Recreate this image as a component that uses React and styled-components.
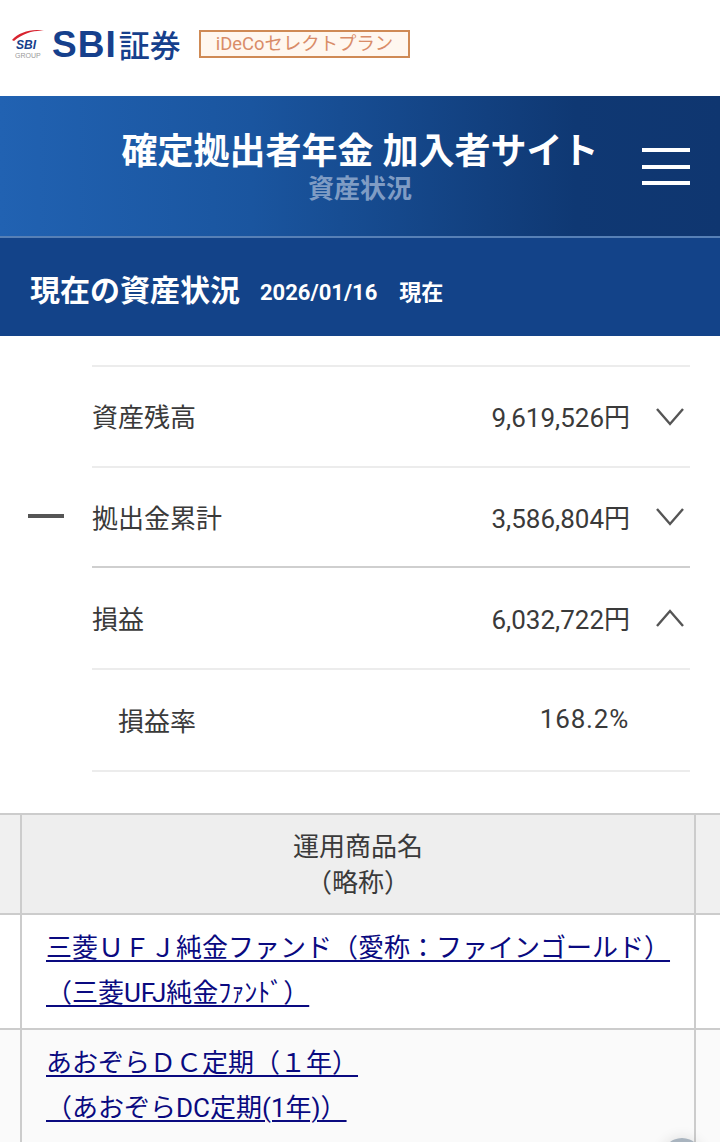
import React from "react";
import styled, { createGlobalStyle } from "styled-components";

const GlobalStyle = createGlobalStyle`
  html, body {
    margin: 0;
    padding: 0;
    background: #fff;
  }
  body {
    font-family: Roboto, "Noto Sans CJK JP", sans-serif;
    color: #333;
  }
`;

const Page = styled.div`
  position: relative;
  width: 720px;
  height: 1142px;
  overflow: hidden;
  background: #fff;
`;

const LogoBar = styled.header`
  height: 96px;
  display: flex;
  align-items: flex-start;
  padding: 28px 0 0 11px;
  box-sizing: border-box;
`;

const LogoMark = styled.svg`
  width: 36px;
  height: 32px;
  flex: none;
  margin-right: 5px;
`;

const LogoText = styled.div`
  font-family: "Liberation Sans", "Noto Sans CJK JP", sans-serif;
  font-size: 37px;
  line-height: 32px;
  font-weight: 700;
  color: #16408c;
  white-space: nowrap;
  width: 147px;
  flex: none;
  letter-spacing: 1px;
  span {
    font-family: "Noto Sans CJK JP", sans-serif;
    font-size: 31px;
    letter-spacing: 0;
    font-weight: 500;
    margin-left: 2px;
  }
`;

const PlanBadge = styled.div`
  width: 211px;
  height: 28px;
  margin-top: 2px;
  box-sizing: border-box;
  border: 2px solid #cf8a55;
  background: #fff7ef;
  color: #d98c68;
  font-size: 18.4px;
  line-height: 24px;
  text-align: center;
  white-space: nowrap;
`;

const TitleBand = styled.div`
  position: relative;
  height: 140px;
  box-sizing: border-box;
  padding-top: 34px;
  background: linear-gradient(90deg, #2162b2 0%, #1a559f 35%, #0f3873 80%, #0f3670 100%);
  text-align: center;
  color: #fff;
`;

const SiteTitle = styled.div`
  font-size: 36px;
  line-height: 44px;
  font-weight: 700;
  white-space: nowrap;
`;

const SiteSub = styled.div`
  font-size: 26px;
  line-height: 30px;
  font-weight: 700;
  color: #7f9cc4;
`;

const MenuButton = styled.div`
  position: absolute;
  right: 30px;
  top: 52px;
  width: 48px;
  height: 37px;
  display: flex;
  flex-direction: column;
  justify-content: space-between;
  span {
    display: block;
    height: 4px;
    background: #fff;
  }
`;

const SectionBand = styled.div`
  height: 100px;
  box-sizing: border-box;
  border-top: 2px solid #5780b6;
  background: #134389;
  color: #fff;
  display: flex;
  align-items: center;
  padding: 2px 0 0 30px;
`;

const SectionTitle = styled.div`
  font-size: 30px;
  font-weight: 700;
  margin-right: 20px;
  white-space: nowrap;
`;

const SectionDate = styled.div`
  font-size: 22px;
  font-weight: 700;
  padding-top: 4px;
  white-space: pre;
`;

const Summary = styled.section`
  padding: 29px 30px 41px 28px;
`;

const SummaryRow = styled.div`
  display: flex;
  align-items: center;
`;

const Dash = styled.div`
  width: 36px;
  height: 4px;
  background: #555;
  flex: none;
  visibility: ${(p) => (p.$hidden ? "hidden" : "visible")};
`;

const RowBody = styled.div`
  flex: 1;
  margin-left: 28px;
  height: ${(p) => p.$height}px;
  box-sizing: border-box;
  border-top: 2px solid ${(p) => p.$line};
  display: flex;
  align-items: center;
  font-size: 26px;
  color: #3a3a3a;
  padding-left: ${(p) => (p.$sub ? 26 : 0)}px;
  padding-bottom: 2px;
`;

const RowLabel = styled.div`
  flex: 1;
  white-space: nowrap;
`;

const RowValue = styled.div`
  white-space: nowrap;
  text-align: right;
  width: 200px;
  margin-right: ${(p) => (p.$plain ? 61 : 60)}px;
  letter-spacing: ${(p) => (p.$plain ? 0.8 : 0)}px;
`;

const ChevronIcon = styled.svg`
  position: absolute;
  width: 28px;
  height: 18px;
  fill: none;
  stroke: #555;
  stroke-width: 2.4;
`;

const RowLastLine = styled.div`
  margin-left: 64px;
  height: 2px;
  background: #ececec;
`;

const ChevronSlot = styled.div`
  position: relative;
  width: 0;
  height: 18px;
  left: -34px;
  top: 1px;
`;

const Table = styled.div`
  display: grid;
  grid-template-columns: 20px 676px 1fr;
  border-top: 2px solid #ccc;
`;

const Cell = styled.div`
  box-sizing: border-box;
  height: ${(p) => p.$height}px;
  background: ${(p) => p.$bg};
  border-bottom: 2px solid #ccc;
  border-left: ${(p) => (p.$main ? "2px solid #ccc" : "none")};
  border-right: ${(p) => (p.$main ? "2px solid #ccc" : "none")};
`;

const HeadCell = styled(Cell)`
  text-align: center;
  font-size: 26px;
  line-height: 36px;
  padding-top: 14px;
  color: #3a3a3a;
`;

const LinkCell = styled(Cell)`
  padding: 11px 0 0 24px;
  font-size: 26px;
  line-height: 45px;
  white-space: nowrap;
`;

const ProductLink = styled.a`
  color: #0a0a80;
  text-decoration: underline;
  text-underline-offset: 3px;
  text-decoration-thickness: 2px;
`;

const FloatingButton = styled.div`
  position: absolute;
  left: 662px;
  top: 1138px;
  width: 40px;
  height: 40px;
  border-radius: 50%;
  background: #a9b4bf;
  box-shadow: 0 0 14px rgba(0, 0, 0, 0.12);
`;

function Chevron({ up }) {
  return (
    <ChevronSlot>
      <ChevronIcon viewBox="0 0 28 18">
        <polyline points={up ? "1,17 14,2 27,17" : "1,1 14,16 27,1"} />
      </ChevronIcon>
    </ChevronSlot>
  );
}

const rows = [
  { label: "資産残高", value: "9,619,526円", height: 101, line: "#ececec", chevron: "down" },
  { label: "拠出金累計", value: "3,586,804円", height: 100, line: "#ececec", chevron: "down", dash: true },
  { label: "損益", value: "6,032,722円", height: 102, line: "#cfcfcf", chevron: "up" },
  { label: "損益率", value: "168.2%", height: 102, line: "#ececec", sub: true },
];

export default function App() {
  return (
    <Page>
      <GlobalStyle />
      <LogoBar>
        <LogoMark viewBox="0 0 36 32">
          <path d="M1 12 C8 4 22 0 34 3 C24 2 12 5 3 13 Z" fill="#d8232f" />
          <text x="5" y="21" fontFamily="Liberation Sans" fontSize="12" fontWeight="700" fontStyle="italic" fill="#16408c">SBI</text>
          <text x="4" y="30" fontFamily="Liberation Sans" fontSize="7" fill="#9a9a9a">GROUP</text>
        </LogoMark>
        <LogoText>SBI<span>証券</span></LogoText>
        <PlanBadge>iDeCoセレクトプラン</PlanBadge>
      </LogoBar>

      <TitleBand>
        <SiteTitle>確定拠出者年金 加入者サイト</SiteTitle>
        <SiteSub>資産状況</SiteSub>
        <MenuButton>
          <span />
          <span />
          <span />
        </MenuButton>
      </TitleBand>

      <SectionBand>
        <SectionTitle>現在の資産状況</SectionTitle>
        <SectionDate>2026/01/16    現在</SectionDate>
      </SectionBand>

      <Summary>
        {rows.map((row) => (
          <SummaryRow key={row.label}>
            <Dash $hidden={!row.dash} />
            <RowBody $height={row.height} $line={row.line} $sub={row.sub}>
              <RowLabel>{row.label}</RowLabel>
              <RowValue $plain={!row.chevron}>{row.value}</RowValue>
              {row.chevron && <Chevron up={row.chevron === "up"} />}
            </RowBody>
          </SummaryRow>
        ))}
        <RowLastLine />
      </Summary>

      <Table>
        <Cell $height={100} $bg="#f0f0f0" />
        <HeadCell $height={100} $bg="#eee" $main>
          運用商品名
          <br />
          （略称）
        </HeadCell>
        <Cell $height={100} $bg="#f0f0f0" />

        <Cell $height={115} $bg="#fff" />
        <LinkCell $height={115} $bg="#fff" $main>
          <ProductLink href="#">
            三菱ＵＦＪ純金ファンド（愛称：ファインゴールド）
            <br />
            （三菱UFJ純金ﾌｧﾝﾄﾞ）
          </ProductLink>
        </LinkCell>
        <Cell $height={115} $bg="#fff" />

        <Cell $height={115} $bg="#fafafa" />
        <LinkCell $height={115} $bg="#fafafa" $main>
          <ProductLink href="#">
            あおぞらＤＣ定期（１年）
            <br />
            （あおぞらDC定期(1年)）
          </ProductLink>
        </LinkCell>
        <Cell $height={115} $bg="#fafafa" />
      </Table>

      <FloatingButton />
    </Page>
  );
}
